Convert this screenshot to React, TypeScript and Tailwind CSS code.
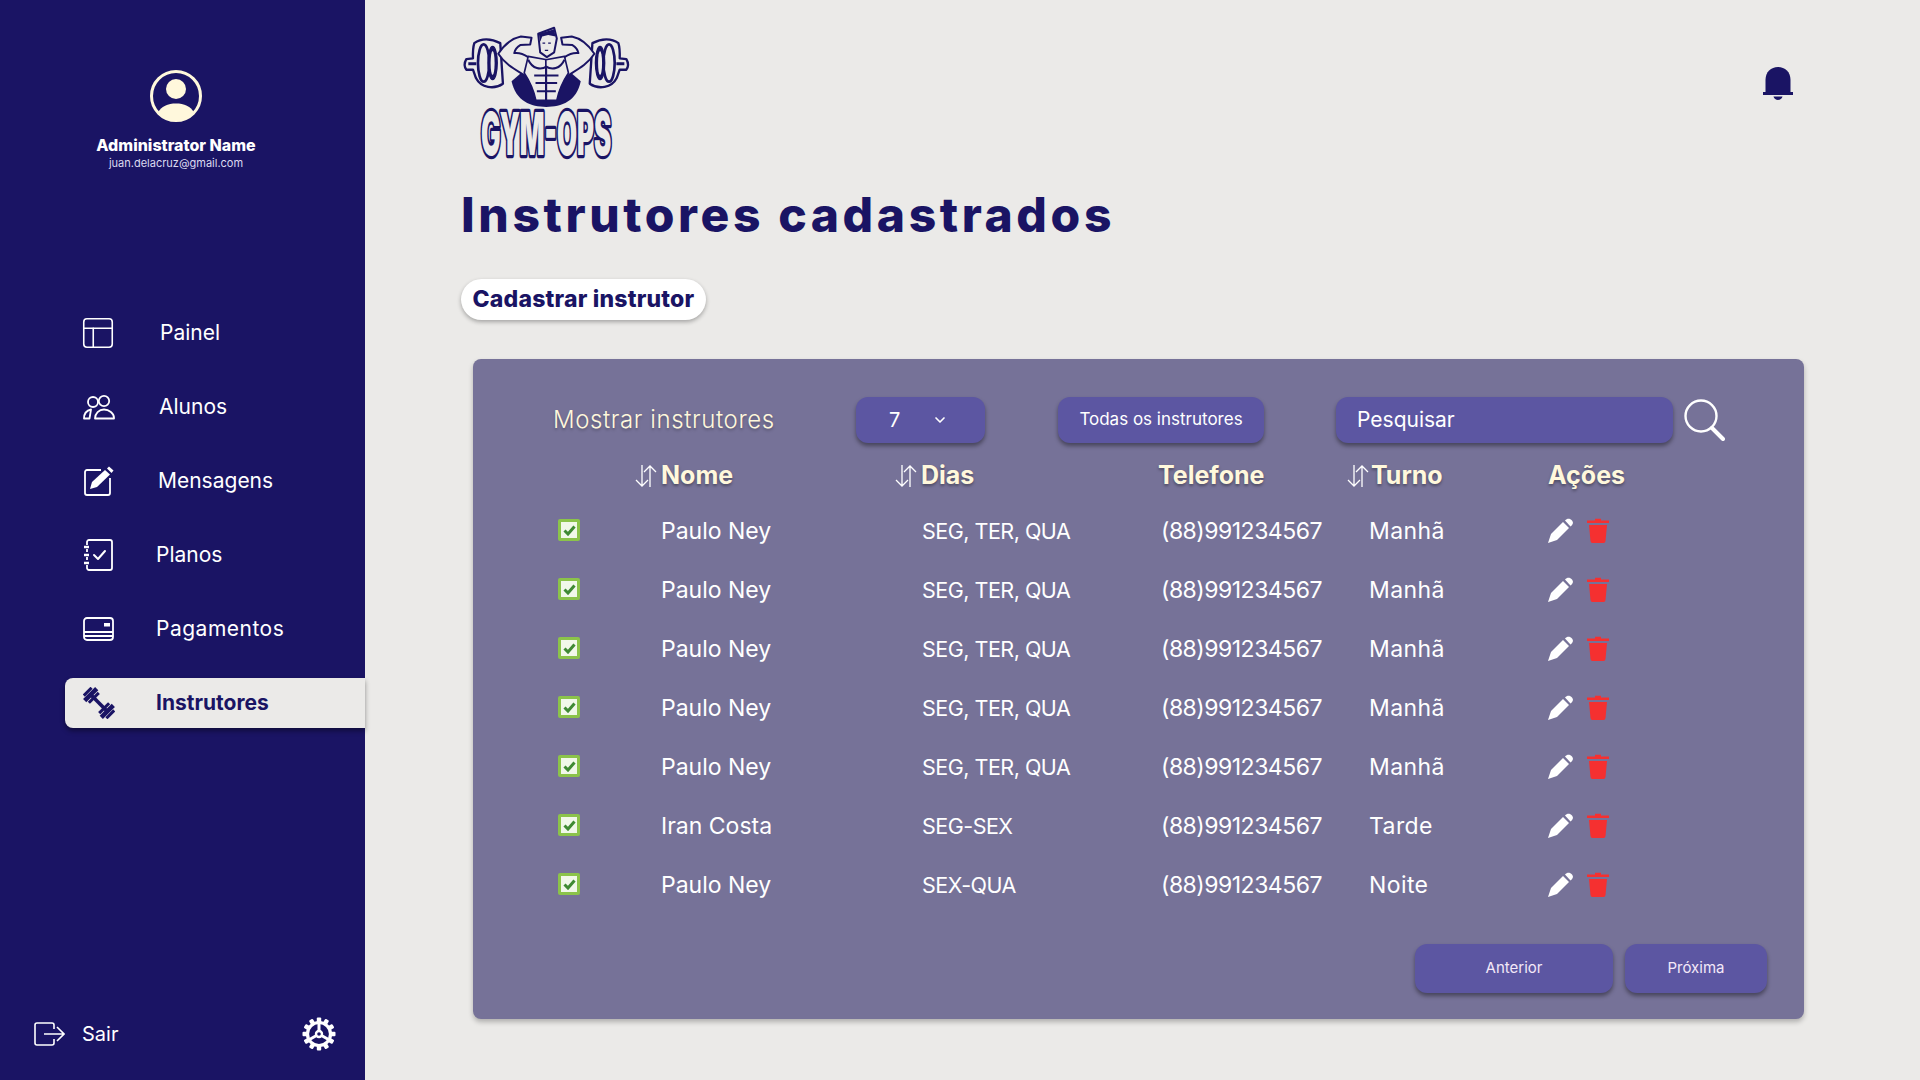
import { ChevronDown, PanelsTopLeft } from "lucide-react"
import type { ReactNode } from "react"

const NAVY = "#1a1464"

const AlunosIcon = () => (
  <svg width="32" height="26" viewBox="0 0 32 26" fill="none" stroke="white" strokeWidth="1.8">
    <circle cx="10" cy="8" r="5" />
    <circle cx="21" cy="7" r="5.2" />
    <path d="M1 24.5c0-4.5 2.5-8 7-9l-1.5 9z" strokeLinejoin="round" />
    <path d="M12 24.5c0-5 4-9 9-9s10 4 10 8.2v.8z" strokeLinejoin="round" />
  </svg>
)

const MensagensIcon = () => (
  <svg width="32" height="30" viewBox="0 0 32 30" fill="none">
    <path d="M18 4H4a2 2 0 0 0-2 2v21a2 2 0 0 0 2 2h21a2 2 0 0 0 2-2V12" stroke="white" strokeWidth="1.8" />
    <path d="M7 23l2-7L22 4l5 4.5L14 21z" fill="white" />
    <path d="M24 2.5l2-2 4.5 4-2 2.5z" fill="white" />
  </svg>
)

const PlanosIcon = () => (
  <svg width="30" height="32" viewBox="0 0 30 32" fill="none" stroke="white" strokeWidth="1.8">
    <path d="M4 6V3a2 2 0 0 1 2-2h21a2 2 0 0 1 2 2v26a2 2 0 0 1-2 2H6a2 2 0 0 1-2-2v-3" />
    <path d="M4 10v3M4 18v3" />
    <path d="M1 8h5M1 16h5M1 24h5" strokeWidth="2.4" />
    <path d="M11 16l4 4 7-8" strokeWidth="2" strokeLinecap="round" strokeLinejoin="round" />
  </svg>
)

const PagamentosIcon = () => (
  <svg width="31" height="24" viewBox="0 0 31 24" fill="none" stroke="white" strokeWidth="1.8">
    <rect x="1" y="1" width="29" height="22" rx="3" />
    <path d="M1 15h29M1 19h29" />
    <rect x="21" y="6" width="6" height="3.5" fill="white" stroke="none" />
  </svg>
)

// haltere na diagonal, anilhas com dentes
const HalterIcon = () => (
  <svg width="32" height="32" viewBox="0 0 32 32" fill={NAVY}>
    <g transform="rotate(45 16 16)">
      <rect x="3" y="14.200" width="26" height="3.600" />
      <rect x="-1.500" y="10.500" width="3" height="11" />
      <rect x="2" y="7.500" width="4.500" height="17" />
      <rect x="7.200" y="9" width="3" height="14" />
      <rect x="21.800" y="9" width="3" height="14" />
      <rect x="25.500" y="7.500" width="4.500" height="17" />
      <rect x="30.500" y="10.500" width="3" height="11" />
    </g>
  </svg>
)

const SairIcon = () => (
  <svg width="31" height="24" viewBox="0 0 31 24" fill="none" stroke="white" strokeWidth="1.6">
    <path d="M20 7V3a2 2 0 0 0-2-2H3a2 2 0 0 0-2 2v18a2 2 0 0 0 2 2h15a2 2 0 0 0 2-2v-4" />
    <path d="M10 12h20M23 5l7 7-7 7" />
  </svg>
)

const GearIcon = () => {
  const teeth = [0, 30, 60, 90, 120, 150, 180, 210, 240, 270, 300, 330]
  return (
    <svg width="34" height="34" viewBox="0 0 34 34" fill="none">
      {teeth.map((a) => (
        <rect key={a} x="14.800" y="0.500" width="4.400" height="5" rx="1" fill="white" transform={`rotate(${a} 17 17)`} />
      ))}
      <circle cx="17" cy="17" r="11.500" stroke="white" strokeWidth="3.200" />
      <circle cx="17" cy="17" r="3" stroke="white" strokeWidth="2.400" />
      <path d="M17 14V6M14.500 18.500l-7 4M19.500 18.500l7 4" stroke="white" strokeWidth="3" />
    </svg>
  )
}

const Logo = () => {
  const half = (
    <g stroke={NAVY} strokeLinejoin="round">
      <path d="M100 100C120 85 150 85 178 100L186 222C160 240 120 235 105 205L96 180 76 180Q66 165 76 148L96 146Q95 115 100 100Z" fill="#ebeae8" strokeWidth="7" />
      <ellipse cx="128" cy="160" rx="17" ry="56" fill="#ebeae8" strokeWidth="8" />
      <ellipse cx="155" cy="160" rx="14" ry="50" fill={NAVY} strokeWidth="4" />
      <ellipse cx="155" cy="160" rx="6" ry="36" fill="#ebeae8" stroke="none" />
      <path d="M82 162h24" strokeWidth="9" />
      <path d="M172 132C190 105 215 85 240 80L272 84 268 104 238 106C228 112 222 120 220 130 235 128 250 134 262 142L262 205 240 190C215 175 190 160 172 132Z" fill="#ebeae8" strokeWidth="6" />
      <path d="M262 140L318 150V272H285C278 240 270 220 250 190Z" fill="#ebeae8" strokeWidth="5" />
      <path d="M262 150C275 178 300 182 318 170M280 197H318M284 220H318M288 245H318M317 170V272" fill="none" strokeWidth="6" />
    </g>
  )
  return (
    <svg width="173" height="150" viewBox="60 40 520 450">
      <path d="M212 215C225 275 270 292 316 292S408 275 420 215L380 180H252Z" fill={NAVY} />
      {half}
      <g transform="translate(633 0) scale(-1 1)">{half}</g>
      <path d="M292 72l48-18 8 32-8 42-22 14-20-14z" fill="#ebeae8" stroke={NAVY} strokeWidth="6" strokeLinejoin="round" />
      <path d="M294 72l46-14 4 22-22-4-18 4-6 16z" fill={NAVY} />
      <path d="M305 100h8M322 100h8M312 122h10" stroke={NAVY} strokeWidth="4" />
      <text
        transform="translate(120 436) scale(0.78 1.78)"
        fontFamily="Inter, sans-serif"
        fontWeight="900"
        fontSize="100"
        fill="#ebeae8"
        stroke={NAVY}
        strokeWidth="5"
        paintOrder="stroke"
        strokeLinejoin="round"
        vectorEffect="non-scaling-stroke"
      >
        GYM-OPS
      </text>
    </svg>
  )
}

const SortIcon = () => (
  <svg width="22" height="24" viewBox="0 0 22 24" fill="none" stroke="white" strokeWidth="1.300">
    <path d="M7 1v21M1 16l6 6 6-6" />
    <path d="M15 23V2M9 8l6-6 6 6" />
  </svg>
)

const CheckBox = () => (
  <span className="-mt-[3px] flex h-[22px] w-[22px] items-center justify-center rounded-[2px] border-[3px] border-[#8bc34a] bg-[#f1f8e9]">
    <svg width="13" height="11" viewBox="0 0 13 11" fill="none" stroke="#3f8a33" strokeWidth="3">
      <path d="M1.500 5.500l3.500 3.500 6.500-7.500" />
    </svg>
  </span>
)

const PencilIcon = () => (
  <svg width="25" height="25" viewBox="0 0 25 25" fill="white">
    <path d="M0 25l3-9L15 4l6 6L9 22z" />
    <path d="M17 2.500c2-2.500 5-2.500 7 0s.5 4.500-1.500 6z" />
  </svg>
)

const TrashIcon = () => (
  <svg width="22" height="25" viewBox="0 0 22 25" fill="#f53030">
    <path d="M0 2.500h8V.8h6v1.700h8V5H0z" />
    <path d="M2 7h18l-1.500 16a2 2 0 0 1-2 2h-11a2 2 0 0 1-2-2z" />
  </svg>
)

const navItems: { label: string; icon: ReactNode; textClass: string; active?: boolean }[] = [
  { label: "Painel", icon: <PanelsTopLeft className="-ml-[4px]" size={38} color="white" strokeWidth={1} />, textClass: "pl-[4px]" },
  { label: "Alunos", icon: <AlunosIcon />, textClass: "pl-[3px]" },
  { label: "Mensagens", icon: <MensagensIcon />, textClass: "pl-[2px]" },
  { label: "Planos", icon: <PlanosIcon />, textClass: "" },
  { label: "Pagamentos", icon: <PagamentosIcon />, textClass: "tracking-[0.5px]" },
  { label: "Instrutores", icon: <HalterIcon />, textClass: "font-bold", active: true },
]

const rows = [
  { nome: "Paulo Ney", dias: "SEG, TER, QUA", turno: "Manhã" },
  { nome: "Paulo Ney", dias: "SEG, TER, QUA", turno: "Manhã" },
  { nome: "Paulo Ney", dias: "SEG, TER, QUA", turno: "Manhã" },
  { nome: "Paulo Ney", dias: "SEG, TER, QUA", turno: "Manhã" },
  { nome: "Paulo Ney", dias: "SEG, TER, QUA", turno: "Manhã" },
  { nome: "Iran Costa", dias: "SEG-SEX", turno: "Tarde" },
  { nome: "Paulo Ney", dias: "SEX-QUA", turno: "Noite" },
]

const gridCols = "grid grid-cols-[103px_260px_238px_210px_179px_1fr] items-center"
const headCell = "flex items-center text-[25px] font-bold text-[#fff8dc] [text-shadow:0_2px_3px_rgba(0,0,0,0.35)]"
const btnShadow = "shadow-[0_3px_4px_rgba(0,0,0,0.4)]"

const Sidebar = () => (
  <aside className="flex h-full w-[365px] shrink-0 flex-col bg-[#1a1464]">
    <div className="flex w-[352px] flex-col items-center pt-[70px]">
      <svg width="52" height="52" viewBox="0 0 52 52">
        <circle cx="26" cy="26" r="24.500" fill="none" stroke="#fff8dc" strokeWidth="3" />
        <circle cx="26" cy="19" r="10" fill="#fff8dc" />
        <path d="M8 43c3-7 10-9.500 18-9.500S41 36 44 43c-9 9-27 9-36 0z" fill="#fff8dc" />
      </svg>
      <p className="mt-[12px] text-[16px] leading-[22px] font-extrabold text-white">Administrator Name</p>
      <p className="text-[11px] leading-[14px] text-[#dcdaf0]">juan.delacruz@gmail.com</p>
    </div>
    <nav className="mt-[138px] ml-[65px] flex flex-col gap-[24px]">
      {navItems.map((item) => (
        <div
          key={item.label}
          className={
            item.active
              ? "flex h-[50px] items-center rounded-l-lg bg-[#ebeae8] pl-[18px] text-[#1a1464] shadow-[0_3px_5px_rgba(0,0,0,0.4)]"
              : "flex h-[50px] items-center pl-[18px] text-white"
          }
        >
          <span className="flex w-[73px] shrink-0 items-center">{item.icon}</span>
          <span className={`text-[21px] ${item.textClass}`}>{item.label}</span>
        </div>
      ))}
    </nav>
    <div className="mt-auto mb-[29px] flex items-center justify-between pr-[29px] pl-[34px]">
      <div className="flex items-center gap-[17px] text-white">
        <SairIcon />
        <span className="text-[20px]">Sair</span>
      </div>
      <GearIcon />
    </div>
  </aside>
)

const Toolbar = () => (
  <div className="flex h-[46px] items-center text-white">
    <span className="w-[303px] text-[24px] font-light tracking-[0.6px] text-[#fff8dc] [text-shadow:0_2px_3px_rgba(0,0,0,0.25)]">
      Mostrar instrutores
    </span>
    <div className={`flex h-full w-[129px] items-center rounded-xl bg-[#5c56a2] pl-[33px] text-[20px] ${btnShadow}`}>
      <span className="w-[43px]">7</span>
      <ChevronDown size={16} strokeWidth={2.500} />
    </div>
    <div className={`ml-[73px] flex h-full w-[206px] items-center justify-center rounded-xl bg-[#5c56a2] text-[17px] ${btnShadow}`}>
      Todas os instrutores
    </div>
    <div className={`ml-[72px] flex h-full w-[337px] items-center rounded-xl bg-[#5c56a2] pl-[21px] text-[21px] ${btnShadow}`}>
      Pesquisar
    </div>
    <svg className="ml-[11px]" width="41" height="42" viewBox="0 0 41 42" fill="none" stroke="white">
      <circle cx="17" cy="17" r="15.500" strokeWidth="2.400" />
      <path d="M28 29l11 11" strokeWidth="4" strokeLinecap="round" />
    </svg>
  </div>
)

const TableHead = () => (
  <div className={`${gridCols} mt-[13px] h-[40px] pl-[5px]`}>
    <span />
    <div className={`${headCell} -ml-[26px] gap-[4px]`}>
      <SortIcon />
      Nome
    </div>
    <div className={`${headCell} -ml-[26px] gap-[4px]`}>
      <SortIcon />
      Dias
    </div>
    <div className={`${headCell} -ml-[1px]`}>Telefone</div>
    <div className={`${headCell} -ml-[22px] gap-[2px]`}>
      <SortIcon />
      Turno
    </div>
    <div className={headCell}>Ações</div>
  </div>
)

export default function App() {
  return (
    <div className="flex h-screen w-full overflow-hidden bg-[#ebeae8] font-['Inter',sans-serif]">
      <Sidebar />
      <main className="flex min-w-0 flex-1 flex-col pt-[23px] pr-[116px] pl-[96px]">
        <header className="flex h-[140px] items-start justify-between">
          <Logo />
          <svg className="mt-[44px] mr-[11px]" width="30" height="33" viewBox="0 0 30 33" fill={NAVY}>
            <path d="M2.500 26V13C2.500 5 8 0 15 0s12.500 5 12.500 13v13z" />
            <rect x="0" y="25" width="30" height="3" />
            <path d="M10.500 29.500h9c-1 4.500-8 4.500-9 0z" />
          </svg>
        </header>
        <h1 className="mt-[22px] text-[48px] leading-[60px] font-extrabold tracking-[3.600px] text-[#1a1464]">
          Instrutores cadastrados
        </h1>
        <button className="mt-[34px] flex h-[41px] w-[245px] items-center justify-center rounded-full bg-white text-[23px] font-extrabold tracking-[0.2px] text-[#1a1464] shadow-[0_2px_4px_rgba(0,0,0,0.3)]">
          Cadastrar instrutor
        </button>
        <section className="mt-[39px] ml-[12px] flex h-[660px] w-[1331px] flex-col rounded-lg bg-[#767298] pt-[38px] pl-[80px] shadow-[0_3px_5px_rgba(0,0,0,0.25)]">
          <Toolbar />
          <TableHead />
          <div className="mt-[6px] flex flex-col pl-[5px] text-[23px] text-white">
            {rows.map((row, i) => (
              <div key={i} className={`${gridCols} h-[59px]`}>
                <CheckBox />
                <span>{row.nome}</span>
                <span className="pl-[1px] text-[21.500px] tracking-[-0.5px]">{row.dias}</span>
                <span className="pl-[2px] tracking-[-0.5px]">(88)991234567</span>
                <span className="tracking-[0.4px]">{row.turno}</span>
                <div className="-mt-[3px] flex items-center gap-[14px]">
                  <PencilIcon />
                  <TrashIcon />
                </div>
              </div>
            ))}
          </div>
          <div className="mt-[29px] flex justify-end gap-[12px] pr-[37px] text-[15px] text-[#f3e8f8]">
            <div className={`flex h-[49px] w-[198px] items-center justify-center rounded-xl bg-[#5c56a2] ${btnShadow}`}>Anterior</div>
            <div className={`flex h-[49px] w-[142px] items-center justify-center rounded-xl bg-[#5c56a2] ${btnShadow}`}>Próxima</div>
          </div>
        </section>
      </main>
    </div>
  )
}
